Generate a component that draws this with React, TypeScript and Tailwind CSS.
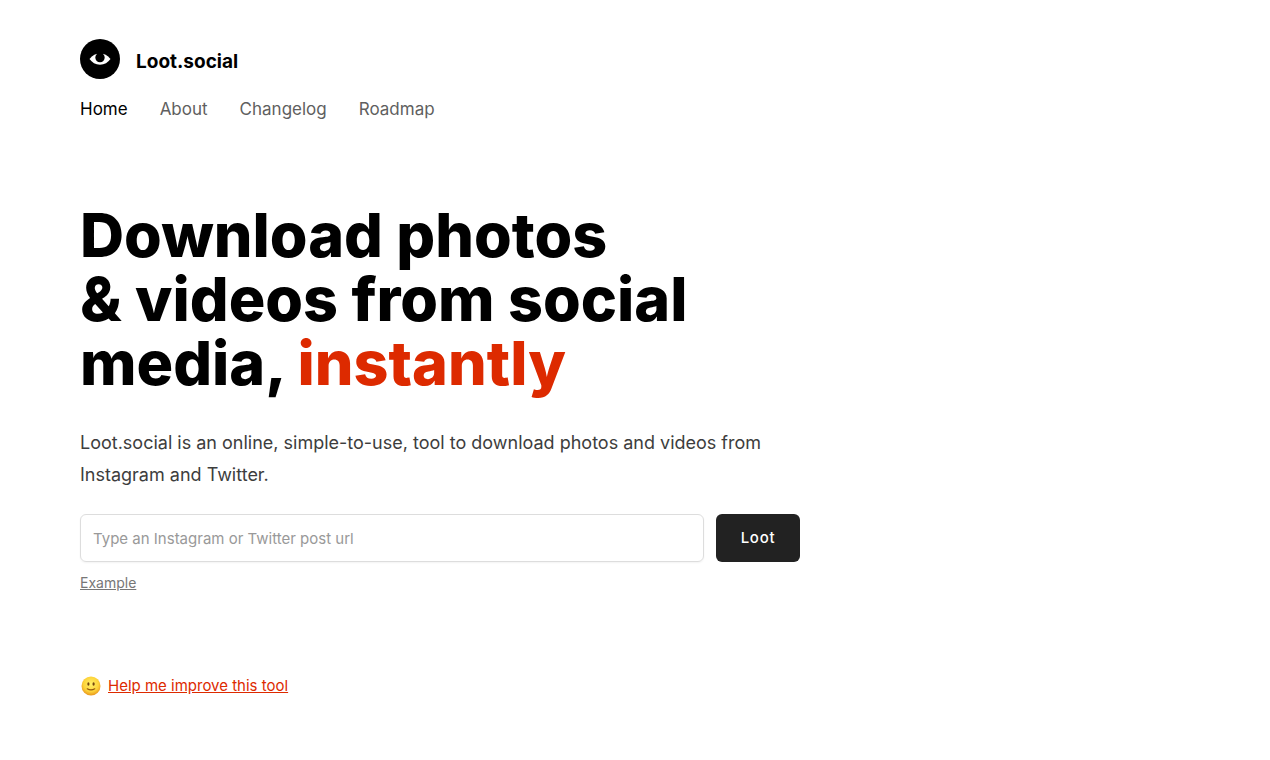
const nav = ["About", "Changelog", "Roadmap"];

function Logo() {
  return (
    <svg viewBox="0 0 40 40" className="size-10" aria-hidden="true">
      <circle cx="20" cy="20" r="20" fill="#000" />
      <path d="M9.500 20C12.500 16.500 16 14.300 20 14.300S27.500 16.500 30.500 20C28 23.500 24.500 25.700 20 25.700S12 23.500 9.500 20Z" fill="#fff" />
      <path d="M17 13.500H23L23.300 15.300A4.700 4.700 0 1 1 16.700 15.300Z" fill="#000" />
    </svg>
  );
}

function Smile() {
  return (
    <svg viewBox="0 0 22 22" className="size-[22px]" aria-hidden="true">
      <defs>
        <radialGradient id="face" cx="50%" cy="40%" r="60%">
          <stop offset="0" stopColor="#fff06a" />
          <stop offset="0.65" stopColor="#fdd43a" />
          <stop offset="1" stopColor="#e8961c" />
        </radialGradient>
      </defs>
      <circle cx="11" cy="11" r="9.500" fill="url(#face)" />
      <ellipse cx="8.400" cy="9" rx="1.100" ry="1.800" fill="#74450e" />
      <ellipse cx="13.600" cy="9" rx="1.100" ry="1.800" fill="#74450e" />
      <path d="M7.200 13.800Q11 16 14.800 13.800" fill="none" stroke="#94590f" strokeWidth="1.100" strokeLinecap="round" />
    </svg>
  );
}

export default function App() {
  return (
    <div className="px-20 pt-[39px] pb-14 font-['Inter',sans-serif] text-black antialiased">
      <header>
        <a href="#" className="flex w-fit items-center gap-4">
          <Logo />
          <span className="pt-1.5 text-[19px] leading-7 font-bold">Loot.social</span>
        </a>
        <nav className="mt-4 flex gap-8 text-[17px] leading-7">
          <a href="#">Home</a>
          {nav.map((label) => (
            <a key={label} href="#" className="text-[#5f5f5f]">{label}</a>
          ))}
        </nav>
      </header>
      <main className="mt-20 max-w-[720px]">
        <h1 className="text-[61px] leading-16 font-extrabold">
          Download photos
          <br />
          &amp; videos from social
          <br />
          media, <span className="text-[#dd2a00]">instantly</span>
        </h1>
        <p className="mt-8 text-lg leading-8 text-[#3d3d3d]">
          Loot.social is an online, simple-to-use, tool to download photos and videos from Instagram and Twitter.
        </p>
        <form className="mt-[23px] flex gap-3" onSubmit={(e) => e.preventDefault()}>
          <input
            type="text"
            aria-label="Post url"
            placeholder="Type an Instagram or Twitter post url"
            className="h-12 min-w-0 flex-1 rounded-md border border-[#ddd] px-3 text-[15px] shadow-xs placeholder:text-[#999]"
          />
          <button type="submit" className="h-12 w-[84px] rounded-md bg-[#222] text-[15px] font-medium tracking-wider text-white">Loot</button>
        </form>
        <button type="button" className="mt-[11px] block text-sm leading-5 text-[#777] underline">Example</button>
        <div className="mt-[81px] flex items-center gap-1.5 text-[15px] leading-6">
          <Smile />
          <a href="#" className="text-[#dd2a00] underline">Help me improve this tool</a>
        </div>
      </main>
    </div>
  );
}
